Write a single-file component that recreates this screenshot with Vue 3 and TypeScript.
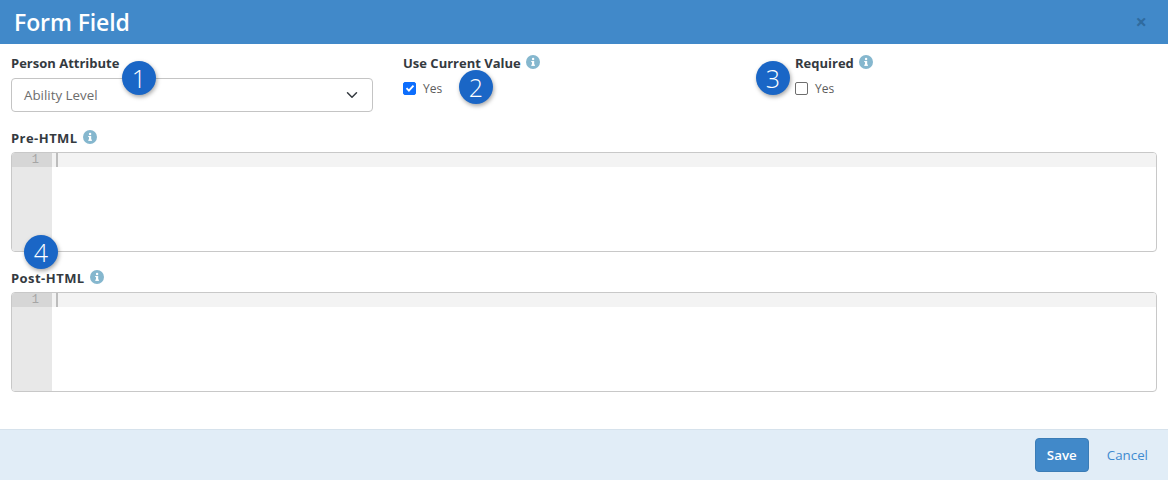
<script setup lang="ts">
const badges = [
  { n: 1, x: 139, y: 78 },
  { n: 2, x: 476, y: 87 },
  { n: 3, x: 773, y: 78 },
  { n: 4, x: 41, y: 252 },
]
</script>

<template>
  <div class="modal">
    <header class="head">
      <h1>Form Field</h1>
      <span class="close">×</span>
    </header>
    <main class="body">
      <div class="row">
        <div class="col">
          <label class="lbl">Person Attribute</label>
          <div class="select">
            <span>Ability Level</span>
            <svg width="12" height="8" viewBox="0 0 12 8"><path d="M1.5 1.8l4.5 4.5 4.5-4.5" fill="none" stroke="#343a40" stroke-width="1.5" stroke-linecap="round" stroke-linejoin="round"/></svg>
          </div>
        </div>
        <div class="col">
          <label class="lbl">Use Current Value
            <svg class="info" viewBox="0 0 14 14"><circle cx="7" cy="7" r="7" fill="#85b7ce"/><rect x="6" y="6" width="2.2" height="4.6" fill="#fff"/><rect x="5.2" y="9.6" width="3.8" height="1.2" fill="#fff"/><rect x="5.2" y="6" width="2" height="1.1" fill="#fff"/><circle cx="7.1" cy="4" r="1.2" fill="#fff"/></svg>
          </label>
          <div class="check">
            <span class="box on"><svg width="10" height="10" viewBox="0 0 10 10"><path d="M1.5 5.2l2.4 2.4 4.6-5" fill="none" stroke="#fff" stroke-width="1.9"/></svg></span>
            <span>Yes</span>
          </div>
        </div>
        <div class="col">
          <label class="lbl">Required
            <svg class="info" viewBox="0 0 14 14"><circle cx="7" cy="7" r="7" fill="#85b7ce"/><rect x="6" y="6" width="2.2" height="4.6" fill="#fff"/><rect x="5.2" y="9.6" width="3.8" height="1.2" fill="#fff"/><rect x="5.2" y="6" width="2" height="1.1" fill="#fff"/><circle cx="7.1" cy="4" r="1.2" fill="#fff"/></svg>
          </label>
          <div class="check">
            <span class="box"></span>
            <span>Yes</span>
          </div>
        </div>
      </div>

      <section class="field">
        <label class="lbl">Pre-HTML
          <svg class="info" viewBox="0 0 14 14"><circle cx="7" cy="7" r="7" fill="#85b7ce"/><rect x="6" y="6" width="2.2" height="4.6" fill="#fff"/><rect x="5.2" y="9.6" width="3.8" height="1.2" fill="#fff"/><rect x="5.2" y="6" width="2" height="1.1" fill="#fff"/><circle cx="7.1" cy="4" r="1.2" fill="#fff"/></svg>
        </label>
        <div class="editor">
          <div class="gutter"><div class="num">1</div></div>
          <div class="code"><div class="line"><i class="caret"></i></div></div>
        </div>
      </section>

      <section class="field">
        <label class="lbl">Post-HTML
          <svg class="info" viewBox="0 0 14 14"><circle cx="7" cy="7" r="7" fill="#85b7ce"/><rect x="6" y="6" width="2.2" height="4.6" fill="#fff"/><rect x="5.2" y="9.6" width="3.8" height="1.2" fill="#fff"/><rect x="5.2" y="6" width="2" height="1.1" fill="#fff"/><circle cx="7.1" cy="4" r="1.2" fill="#fff"/></svg>
        </label>
        <div class="editor">
          <div class="gutter"><div class="num">1</div></div>
          <div class="code"><div class="line"><i class="caret"></i></div></div>
        </div>
      </section>
    </main>
    <footer class="foot">
      <button class="save">Save</button>
      <a class="cancel">Cancel</a>
    </footer>
    <span v-for="b in badges" :key="b.n" class="badge" :style="{ left: b.x + 'px', top: b.y + 'px' }">{{ b.n }}</span>
  </div>
</template>

<style scoped>
.modal {
  position: relative;
  width: 1168px;
  height: 480px;
  display: flex;
  flex-direction: column;
  background: #fff;
  font-family: "Open Sans", sans-serif;
  font-size: 12px;
  color: #515151;
  overflow: hidden;
}
.head {
  height: 44px;
  flex: none;
  box-sizing: border-box;
  background: #4189c9;
  display: flex;
  align-items: center;
  justify-content: space-between;
  padding: 0 21px 0 14px;
}
.head h1 {
  margin: 0;
  font-size: 23px;
  font-weight: 600;
  letter-spacing: -0.1px;
  color: #fff;
}
.close {
  font-size: 20px;
  font-weight: 700;
  color: #2f6b9f;
  line-height: 1;
}
.body {
  flex: 1;
  padding: 0 11px;
}
.row {
  display: grid;
  grid-template-columns: 362px 362px 362px;
  column-gap: 30px;
  padding-top: 9px;
  height: 83px;
  box-sizing: border-box;
}
.lbl {
  display: flex;
  align-items: center;
  gap: 5px;
  height: 20px;
  font-size: 13px;
  font-weight: 700;
  color: #343a3f;
}
.col .lbl {
  margin-bottom: 5px;
}
.info {
  width: 14px;
  height: 14px;
  margin-top: -2px;
}
.select {
  height: 34px;
  box-sizing: border-box;
  border: 1px solid #c4c4c4;
  border-radius: 4px;
  display: flex;
  align-items: center;
  justify-content: space-between;
  padding: 0 14px 0 12px;
  font-size: 13.33px;
  color: #6d6d6d;
}
.check {
  display: flex;
  align-items: center;
  gap: 7px;
  height: 20px;
  color: #5c5c5c;
}
.box {
  width: 13px;
  height: 13px;
  box-sizing: border-box;
  border: 1px solid #6e6e6e;
  border-radius: 2px;
  background: #fff;
  display: flex;
  align-items: center;
  justify-content: center;
}
.box.on {
  background: #0d6efd;
  border-color: #0d6efd;
}
.field {
  height: 140px;
}
.field .lbl {
  padding-top: 1px;
  margin-bottom: 4px;
  letter-spacing: 0.45px;
}
.editor {
  height: 100px;
  box-sizing: border-box;
  border: 1px solid #c8c8c8;
  border-radius: 4px;
  display: flex;
  overflow: hidden;
  background: #fff;
}
.gutter {
  width: 40px;
  flex: none;
  background: #e8e8e8;
}
.num {
  height: 14px;
  background: #d6d6d6;
  font-family: "Liberation Mono", monospace;
  font-size: 12px;
  line-height: 15px;
  text-align: right;
  padding-right: 13px;
  color: #a5a5a5;
}
.code {
  flex: 1;
}
.line {
  height: 14px;
  background: #f3f3f3;
  padding-left: 4px;
}
.caret {
  display: block;
  width: 2px;
  height: 14px;
  background: #bdbdbd;
}
.foot {
  height: 51px;
  flex: none;
  box-sizing: border-box;
  background: #e1edf7;
  border-top: 1px solid #d6e2ec;
  display: flex;
  align-items: center;
  justify-content: flex-end;
  padding: 0 20px 1px 0;
  gap: 18px;
}
.save {
  width: 54px;
  height: 34px;
  background: #4189c9;
  border: 1px solid #3a7cb6;
  border-radius: 4px;
  color: #fff;
  font-family: inherit;
  font-size: 13.33px;
  font-weight: 600;
  padding: 0;
}
.cancel {
  color: #3f8bd0;
  font-size: 13.33px;
}
.badge {
  position: absolute;
  width: 34px;
  height: 34px;
  margin-left: -17px;
  margin-top: -17px;
  border-radius: 50%;
  background: #1a66c6;
  color: #fff;
  font-size: 25px;
  font-weight: 300;
  line-height: 34px;
  text-align: center;
  box-shadow: 1px 2px 4px rgba(0, 0, 0, 0.35);
}
</style>
